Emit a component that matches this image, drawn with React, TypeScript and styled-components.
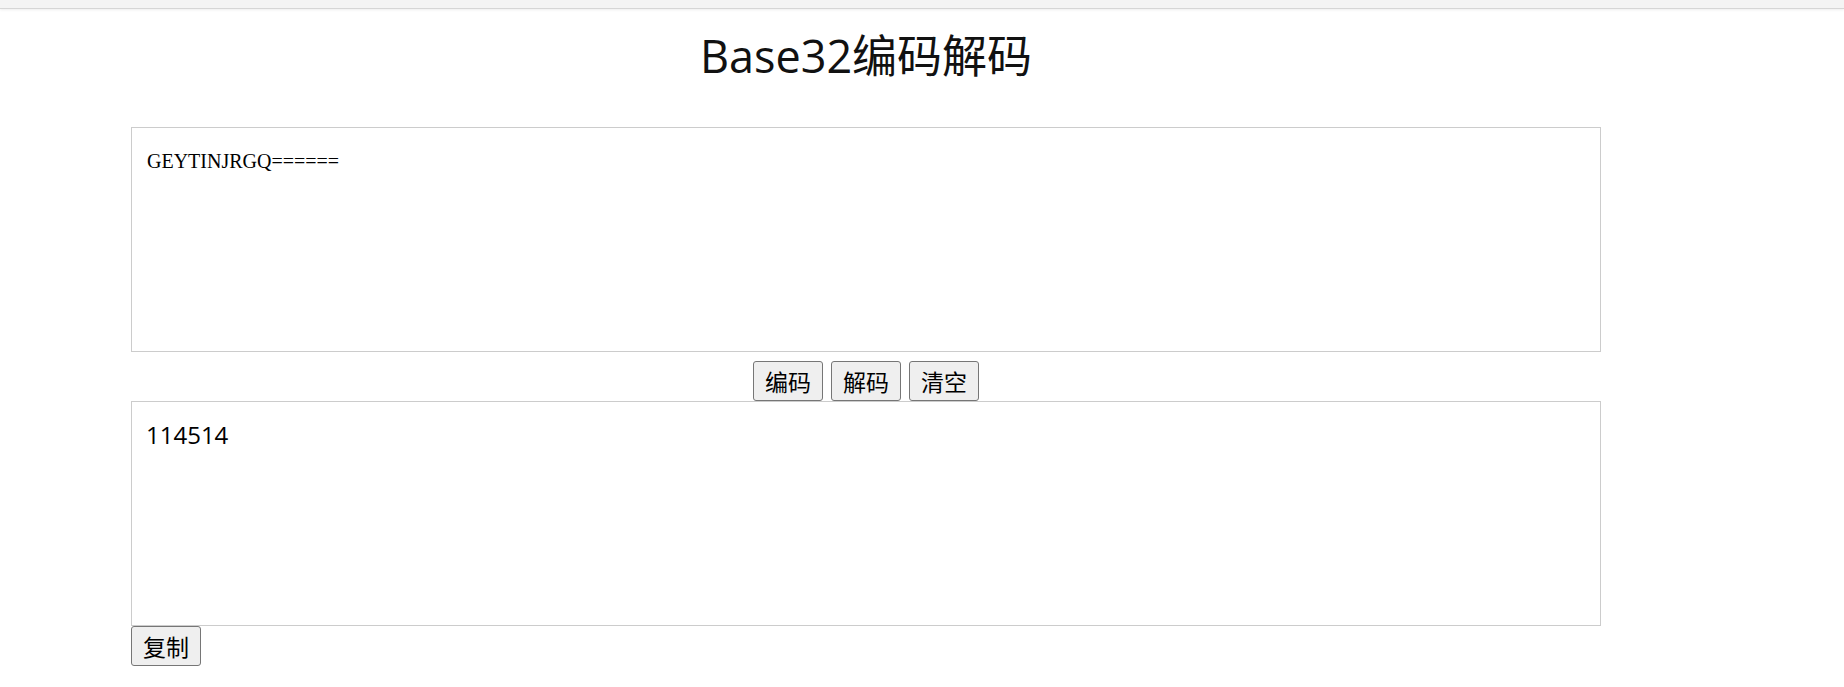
import React from "react";
import styled, { createGlobalStyle } from "styled-components";

const GlobalStyle = createGlobalStyle`
  html, body {
    margin: 0;
    padding: 0;
    background: #ffffff;
    font-family: "Open Sans", "Noto Sans CJK SC", sans-serif;
    color: #000000;
  }
`;

const TopBar = styled.div`
  height: 8px;
  background: #f4f4f4;
  border-bottom: 1px solid #d6d6d6;
  box-shadow: 0 1px 3px rgba(0, 0, 0, 0.07);
`;

const Main = styled.main`
  width: 1470px;
  margin-left: 131px;
  display: flex;
  flex-direction: column;
`;

const Title = styled.h1`
  margin: 17px 0 0;
  height: 60px;
  font-family: "Open Sans", "Noto Sans CJK SC", sans-serif;
  font-weight: 400;
  font-size: 45px;
  line-height: 60px;
  text-align: center;
  color: #111111;
`;

const Area = styled.textarea<{ $mono?: boolean }>`
  box-sizing: border-box;
  display: block;
  width: 100%;
  height: 225px;
  margin: 0;
  border: 1px solid #cccccc;
  outline: none;
  resize: none;
  background: #ffffff;
  color: #000000;
  font-family: ${(p) =>
    p.$mono ? '"Liberation Serif", serif' : '"Open Sans", "Noto Sans CJK SC", sans-serif'};
  font-size: ${(p) => (p.$mono ? "20px" : "24px")};
  line-height: ${(p) => (p.$mono ? "24px" : "32px")};
  padding: ${(p) => (p.$mono ? "21px 15px" : "17px 14px")};
`;

const InputArea = styled(Area)`
  margin-top: 41px;
`;

const ButtonRow = styled.div`
  display: flex;
  justify-content: center;
  gap: 8px;
  margin-top: 9px;
`;

const Button = styled.button`
  box-sizing: border-box;
  height: 40px;
  padding: 3px 11px;
  margin: 0;
  border: 1px solid #767676;
  border-radius: 3px;
  background: #efefef;
  color: #000000;
  font-family: "Noto Sans CJK SC", sans-serif;
  font-size: 23px;
  line-height: 32px;
  cursor: pointer;
`;

const CopyRow = styled.div`
  display: flex;
  justify-content: flex-start;
`;

export default function App() {
  return (
    <>
      <GlobalStyle />
      <TopBar />
      <Main>
        <Title>Base32编码解码</Title>
        <InputArea $mono defaultValue="GEYTINJRGQ======" spellCheck={false} />
        <ButtonRow>
          <Button>编码</Button>
          <Button>解码</Button>
          <Button>清空</Button>
        </ButtonRow>
        <Area defaultValue="114514" spellCheck={false} />
        <CopyRow>
          <Button>复制</Button>
        </CopyRow>
      </Main>
    </>
  );
}
